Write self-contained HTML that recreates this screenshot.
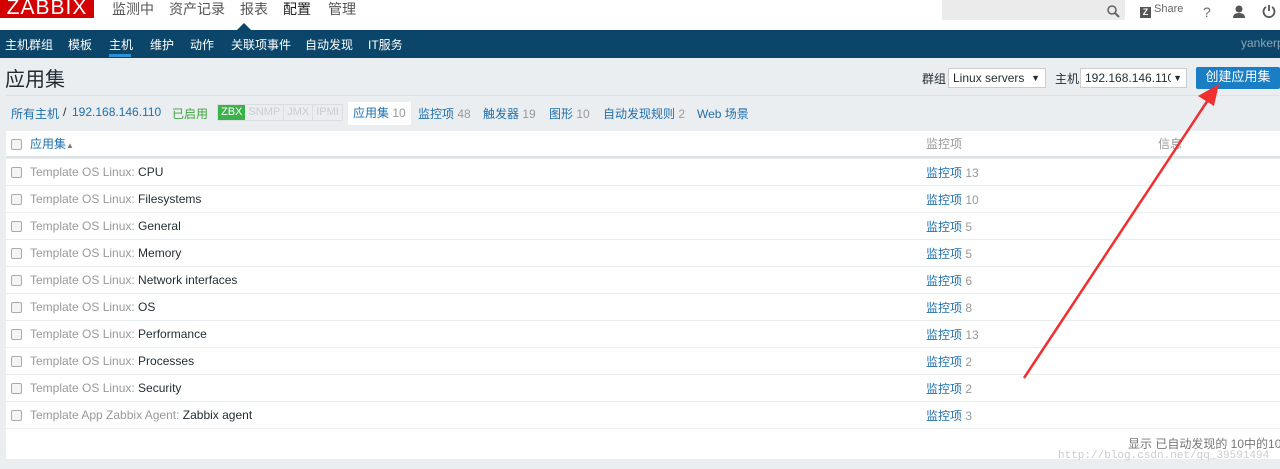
<!DOCTYPE html>
<html><head><meta charset="utf-8"><style>
body{margin:0;width:1280px;height:469px;overflow:hidden;background:#ebeef0;font-family:"Liberation Sans","Noto Sans CJK SC",sans-serif;font-size:12px;color:#1f2c33;position:relative}
span{white-space:nowrap}
.top{position:absolute;left:0;top:0;width:1280px;height:30px;background:#fff}
.logo{position:absolute;left:0;top:-3px;width:94px;height:21px;background:#d40000;color:#fff;font-size:21px;line-height:22px;text-align:center;letter-spacing:1px}
.mm{position:absolute;top:-1px;font-size:14px;color:#555}
.nav{position:absolute;left:0;top:30px;width:1280px;height:28px;background:#0b466a}
.nav span{position:absolute;top:6px;color:#fff;font-size:12px}
.a{color:#1f6fab}
.g{color:#999}
.row{position:absolute;left:6px;width:1274px;height:26px;border-bottom:1px solid #ebeef0;background:#fff}
.row .cb{position:absolute;left:5px;top:8px;width:9px;height:9px;border:1px solid #aaa;border-radius:2px;background:#f4f4f4}
.row .n{position:absolute;left:24px;top:6px}
.row .m{position:absolute;left:920px;top:5px}
.sel{position:absolute;top:68px;height:20px;border:1px solid #ccc;background:#fff;font-size:12px;line-height:18px;padding-left:4px;box-sizing:border-box;white-space:nowrap;overflow:hidden}
</style></head><body>
<div class="top">
<div class="logo">ZABBIX</div>
<span class="mm" style="left:112px">监测中</span><span class="mm" style="left:169px">资产记录</span><span class="mm" style="left:240px">报表</span><span class="mm" style="left:283px;color:#222">配置</span><span class="mm" style="left:328px">管理</span>
<div style="position:absolute;left:942px;top:0;width:183px;height:20px;background:#ebebeb"></div>
<svg style="position:absolute;left:1107px;top:5px" width="13" height="13"><circle cx="5" cy="5" r="4" fill="none" stroke="#666" stroke-width="1.6"/><line x1="8" y1="8" x2="12" y2="12" stroke="#666" stroke-width="2"/></svg>
<div style="position:absolute;left:1140px;top:7px;width:11px;height:11px;background:#555;color:#fff;font-size:9px;line-height:11px;text-align:center;font-weight:bold">Z</div>
<span style="position:absolute;left:1154px;top:3px;color:#666;font-size:11px">Share</span>
<span style="position:absolute;left:1203px;top:4px;color:#666;font-size:14px">?</span>
<svg style="position:absolute;left:1232px;top:5px" width="14" height="13"><circle cx="7" cy="4" r="3.5" fill="#555"/><path d="M1 13 Q1 8 7 8 Q13 8 13 13Z" fill="#555"/></svg>
<svg style="position:absolute;left:1262px;top:4px" width="14" height="14"><path d="M4 3 A5.5 5.5 0 1 0 10 3" fill="none" stroke="#555" stroke-width="1.8"/><line x1="7" y1="1" x2="7" y2="7" stroke="#555" stroke-width="1.8"/></svg>
<svg style="position:absolute;left:236px;top:23px" width="16" height="8"><path d="M0 8 L8 0 L16 8Z" fill="#0b466a"/></svg>
</div>
<div class="nav">
<span style="left:5px">主机群组</span><span style="left:68px">模板</span><span style="left:109px">主机</span><span style="left:150px">维护</span><span style="left:190px">动作</span><span style="left:231px">关联项事件</span><span style="left:305px">自动发现</span><span style="left:368px">IT服务</span>
<div style="position:absolute;left:109px;top:24px;width:22px;height:3px;background:#2f8fd6"></div>
<span style="left:1241px;color:#8aa5b8">yankerp</span>
</div>
<div style="position:absolute;left:5px;top:63px;font-size:20px">应用集</div>
<span style="position:absolute;left:922px;top:70px">群组</span>
<div class="sel" style="left:948px;width:98px">Linux servers<span style="position:absolute;right:5px;font-size:9px">▼</span></div>
<span style="position:absolute;left:1055px;top:70px">主机</span>
<div class="sel" style="left:1080px;width:107px">192.168.146.110<span style="position:absolute;right:4px;top:0;font-size:9px;background:#fff;padding-left:2px">▼</span></div>
<div style="position:absolute;left:1196px;top:67px;width:84px;height:22px;background:#1a7ec4;color:#fff;font-size:13px;line-height:20px;text-align:center;border-radius:2px">创建应用集</div>
<div style="position:absolute;left:6px;top:95px;width:1274px;height:1px;background:#dde2e5"></div>
<div style="position:absolute;top:105px;left:11px;width:1270px;white-space:nowrap">
<span class="a" style="position:absolute;left:0">所有主机</span><span style="position:absolute;left:52px">/</span><span class="a" style="position:absolute;left:61px">192.168.146.110</span>
<span style="position:absolute;left:161px;color:#3ca33c">已启用</span>
<span style="position:absolute;left:206px;top:-1px;border:1px solid #ddd;height:15px;font-size:11px;line-height:15px;white-space:nowrap"><span style="background:#3bb34a;color:#fff;padding:0 3px;display:inline-block">ZBX</span><span style="color:#ccc;padding:0 3px;border-right:1px solid #ddd;display:inline-block">SNMP</span><span style="color:#ccc;padding:0 3px;border-right:1px solid #ddd;display:inline-block">JMX</span><span style="color:#ccc;padding:0 3px;display:inline-block">IPMI</span></span>
<span style="position:absolute;left:337px;top:-3px;background:#fff;padding:2px 5px 4px"><span class="a">应用集</span> <span class="g">10</span></span>
<span style="position:absolute;left:407px"><span class="a">监控项</span> <span class="g">48</span></span>
<span style="position:absolute;left:472px"><span class="a">触发器</span> <span class="g">19</span></span>
<span style="position:absolute;left:538px"><span class="a">图形</span> <span class="g">10</span></span>
<span style="position:absolute;left:592px"><span class="a">自动发现规则</span> <span class="g">2</span></span>
<span style="position:absolute;left:686px" class="a">Web 场景</span>
</div>
<div class="row" style="top:131px;border-bottom:2px solid #dde2e5;height:25px"><div class="cb"></div><span class="n a" style="top:4px">应用集<span style="font-size:8px;color:#777">▲</span></span><span class="m g" style="top:4px">监控项</span><span style="position:absolute;left:1152px;top:4px" class="g">信息</span></div>
<div class="row" style="top:159px"><div class="cb"></div><span class="n"><span class="g">Template OS Linux:</span> CPU</span><span class="m"><span class="a">监控项</span> <span class="g">13</span></span></div>
<div class="row" style="top:186px"><div class="cb"></div><span class="n"><span class="g">Template OS Linux:</span> Filesystems</span><span class="m"><span class="a">监控项</span> <span class="g">10</span></span></div>
<div class="row" style="top:213px"><div class="cb"></div><span class="n"><span class="g">Template OS Linux:</span> General</span><span class="m"><span class="a">监控项</span> <span class="g">5</span></span></div>
<div class="row" style="top:240px"><div class="cb"></div><span class="n"><span class="g">Template OS Linux:</span> Memory</span><span class="m"><span class="a">监控项</span> <span class="g">5</span></span></div>
<div class="row" style="top:267px"><div class="cb"></div><span class="n"><span class="g">Template OS Linux:</span> Network interfaces</span><span class="m"><span class="a">监控项</span> <span class="g">6</span></span></div>
<div class="row" style="top:294px"><div class="cb"></div><span class="n"><span class="g">Template OS Linux:</span> OS</span><span class="m"><span class="a">监控项</span> <span class="g">8</span></span></div>
<div class="row" style="top:321px"><div class="cb"></div><span class="n"><span class="g">Template OS Linux:</span> Performance</span><span class="m"><span class="a">监控项</span> <span class="g">13</span></span></div>
<div class="row" style="top:348px"><div class="cb"></div><span class="n"><span class="g">Template OS Linux:</span> Processes</span><span class="m"><span class="a">监控项</span> <span class="g">2</span></span></div>
<div class="row" style="top:375px"><div class="cb"></div><span class="n"><span class="g">Template OS Linux:</span> Security</span><span class="m"><span class="a">监控项</span> <span class="g">2</span></span></div>
<div class="row" style="top:402px"><div class="cb"></div><span class="n"><span class="g">Template App Zabbix Agent:</span> Zabbix agent</span><span class="m"><span class="a">监控项</span> <span class="g">3</span></span></div>
<div style="position:absolute;left:6px;top:429px;width:1274px;height:30px;background:#fff"></div>
<span style="position:absolute;left:1128px;top:435px;color:#777">显示 已自动发现的 10中的10</span>
<span style="position:absolute;left:1058px;top:450px;color:#ccc;font-size:11px;font-family:'Liberation Mono',monospace">http://blog.csdn.net/qq_39591494</span>
<svg style="position:absolute;left:0;top:0" width="1280" height="469"><line x1="1024" y1="378" x2="1208" y2="100" stroke="#f03030" stroke-width="2.5"/><path d="M1219 84 L1198 96 L1214 106Z" fill="#f03030"/></svg>
</body></html>
